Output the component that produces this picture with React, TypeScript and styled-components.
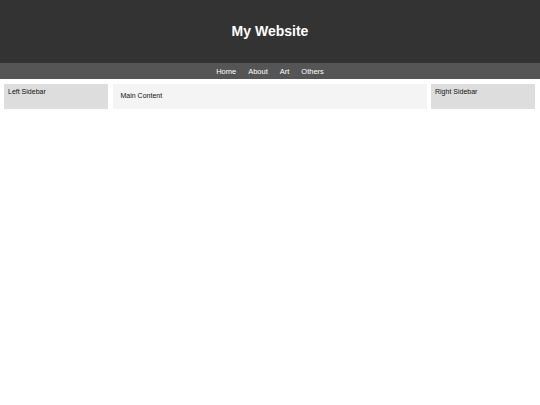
import React from "react";
import styled, { createGlobalStyle } from "styled-components";

const GlobalStyle = createGlobalStyle`
  body {
    margin: 0;
    font-family: "Liberation Sans", Arial, sans-serif;
    background: #ffffff;
  }
`;

const Header = styled.header`
  background-color: #333333;
  color: #ffffff;
  height: 63px;
  display: flex;
  align-items: center;
  justify-content: center;
`;

const Title = styled.h1`
  margin: 0 0 2px;
  font-size: 14px;
  font-weight: bold;
`;

const Nav = styled.nav`
  background-color: #555555;
  height: 16px;
  display: flex;
  align-items: center;
  justify-content: center;
  gap: 12px;
`;

const NavLink = styled.a`
  color: #ffffff;
  font-size: 7.5px;
  text-decoration: none;
`;

const Row = styled.div`
  display: flex;
  gap: 4.5px;
  padding: 4.5px 5px 0 4px;
`;

const Sidebar = styled.aside`
  background-color: #dddddd;
  width: 104px;
  flex: 0 0 104px;
  padding: 4px;
  box-sizing: border-box;
  font-size: 7px;
  color: #111111;
`;

const Main = styled.main`
  background-color: #f4f4f4;
  flex: 1;
  padding: 8px;
  height: 25px;
  box-sizing: border-box;
  font-size: 7px;
  color: #111111;
`;

const App: React.FC = () => {
  return (
    <>
      <GlobalStyle />
      <Header>
        <Title>My Website</Title>
      </Header>
      <Nav>
        <NavLink href="#">Home</NavLink>
        <NavLink href="#">About</NavLink>
        <NavLink href="#">Art</NavLink>
        <NavLink href="#">Others</NavLink>
      </Nav>
      <Row>
        <Sidebar>Left Sidebar</Sidebar>
        <Main>Main Content</Main>
        <Sidebar>Right Sidebar</Sidebar>
      </Row>
    </>
  );
};

export default App;
